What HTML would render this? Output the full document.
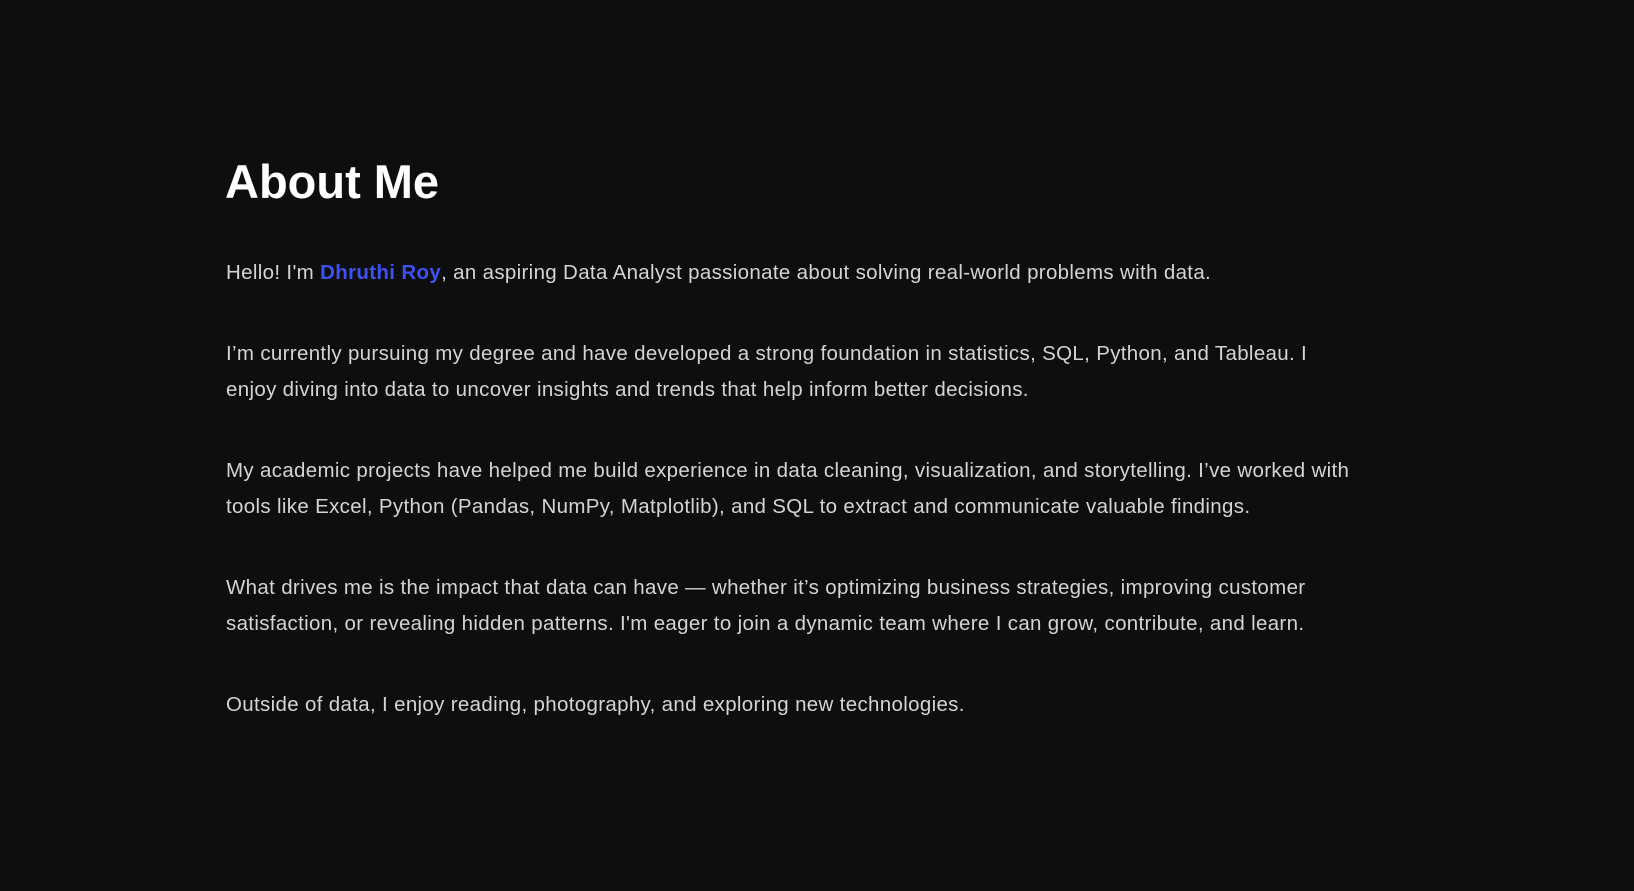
<!DOCTYPE html>
<html><head><meta charset="utf-8"><style>
html,body{margin:0;padding:0;background:#0e0e0e;width:1634px;height:891px;overflow:hidden}
body{font-family:"Liberation Sans",sans-serif;position:relative}
h1{position:absolute;left:225px;top:158px;margin:0;font-size:47px;line-height:47px;font-weight:bold;color:#fff}
p{position:absolute;left:226px;margin:0;font-size:20.5px;letter-spacing:0.33px;line-height:35.5px;color:#d4d4d4;white-space:nowrap}
b{color:#3d52f2}
</style></head><body>
<h1>About Me</h1>
<p style="top:255px">Hello! I'm <b>Dhruthi Roy</b>, an aspiring Data Analyst passionate about solving real-world problems with data.</p>
<p style="top:336px">I’m currently pursuing my degree and have developed a strong foundation in statistics, SQL, Python, and Tableau. I<br>enjoy diving into data to uncover insights and trends that help inform better decisions.</p>
<p style="top:453px">My academic projects have helped me build experience in data cleaning, visualization, and storytelling. I’ve worked with<br>tools like Excel, Python (Pandas, NumPy, Matplotlib), and SQL to extract and communicate valuable findings.</p>
<p style="top:570px">What drives me is the impact that data can have — whether it’s optimizing business strategies, improving customer<br>satisfaction, or revealing hidden patterns. I'm eager to join a dynamic team where I can grow, contribute, and learn.</p>
<p style="top:687px">Outside of data, I enjoy reading, photography, and exploring new technologies.</p>
</body></html>
